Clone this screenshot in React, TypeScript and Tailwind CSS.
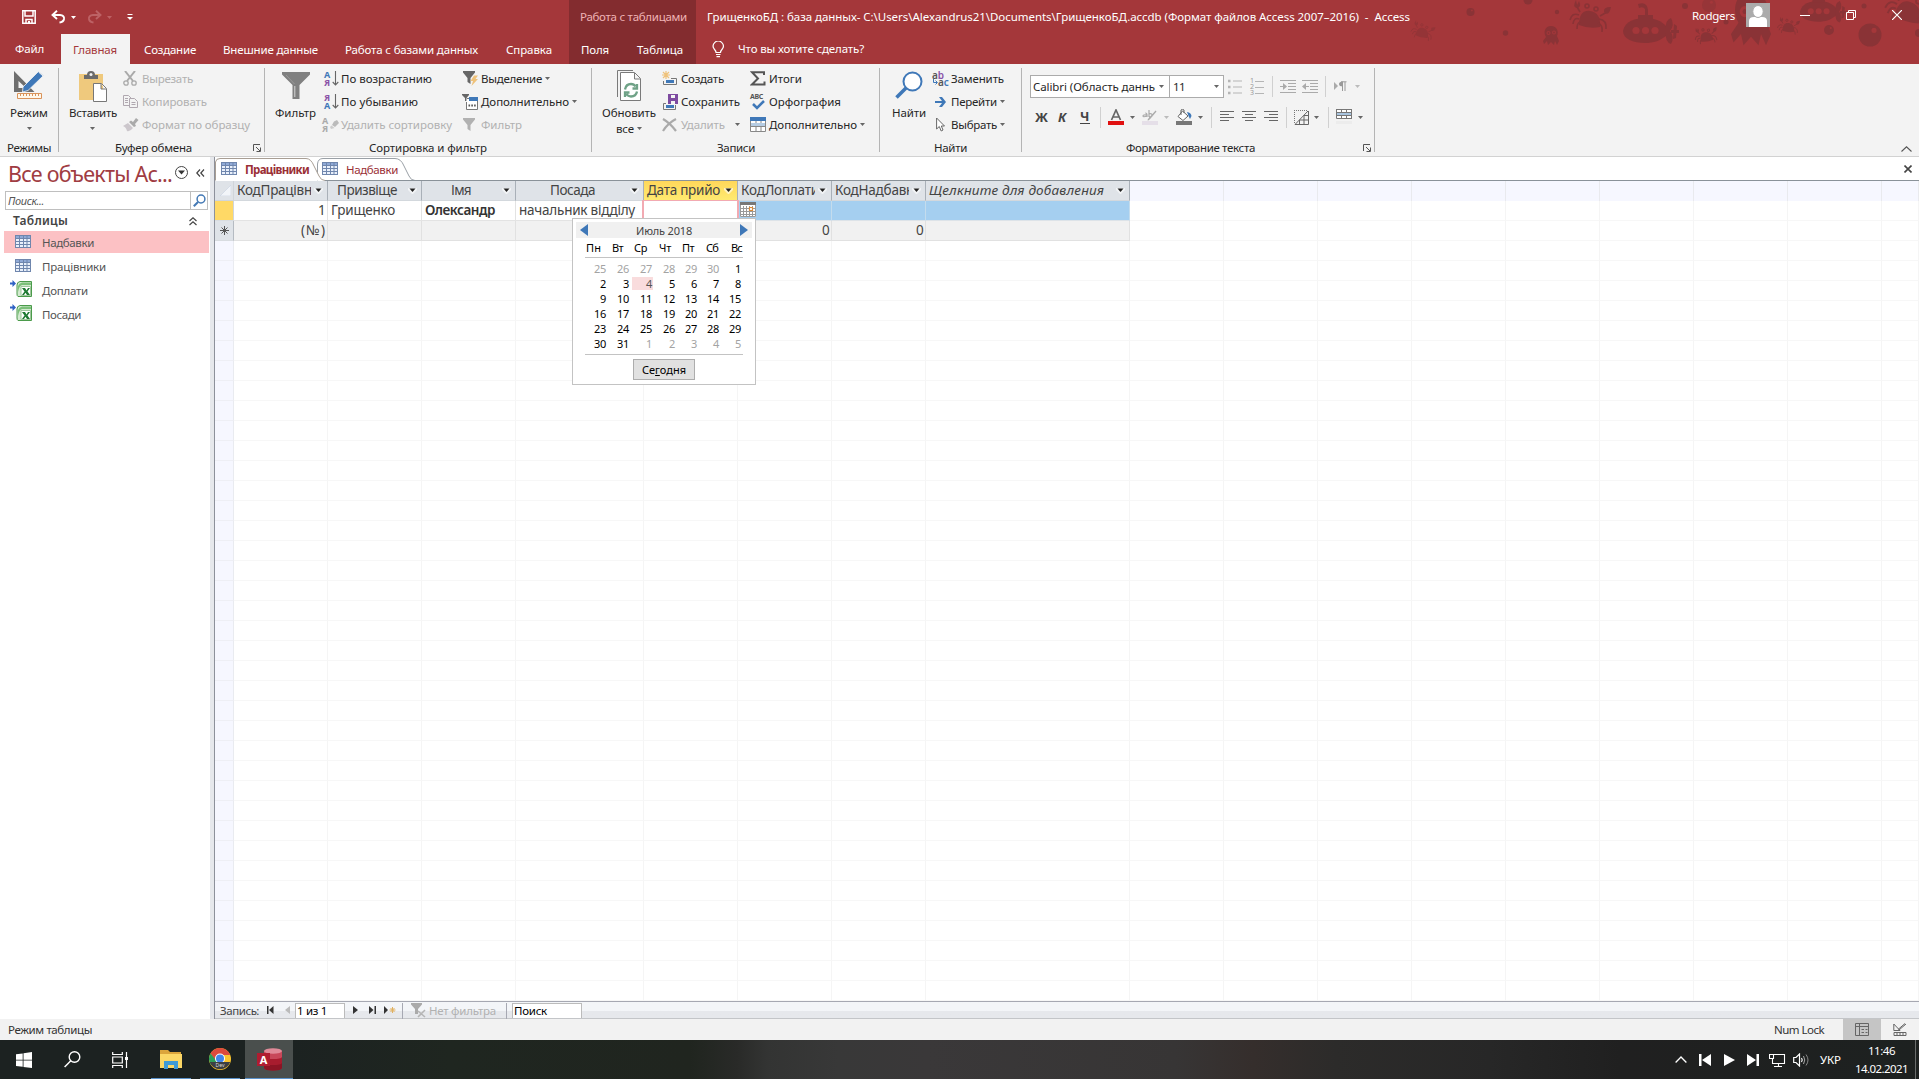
import { useLayoutEffect, useRef } from "react";
import type { ReactNode } from "react";

/* Text run tracked so that it fills the given width. */
function Fit({ w, className = "", children }: { w: number; className?: string; children: string }) {
  const ref = useRef<HTMLSpanElement>(null);
  useLayoutEffect(() => {
    const el = ref.current;
    if (!el) return;
    el.style.letterSpacing = "0px";
    const natural = el.getBoundingClientRect().width;
    el.style.letterSpacing = `${(w - natural) / children.length}px`;
  }, [w, children]);
  return (
    <span className={`inline-block shrink-0 whitespace-pre ${className}`} style={{ width: w }}>
      <span ref={ref}>{children}</span>
    </span>
  );
}

function Svg({ w, h, className = "", children }: { w: number; h: number; className?: string; children: ReactNode }) {
  return (
    <svg width={w} height={h} viewBox={`0 0 ${w} ${h}`} className={`block shrink-0 ${className}`} fill="none">
      {children}
    </svg>
  );
}

function Caret({ className = "", color = "#666" }: { className?: string; color?: string }) {
  return (
    <Svg w={5} h={3} className={className}>
      <path d="M0 0h5L2.500 3z" fill={color} />
    </Svg>
  );
}

/* ---------- title bar ---------- */

function Crab({ t }: { t: string }) {
  return (
    <g transform={t} stroke="#8a3336" fill="none" strokeWidth="1.600">
      <path d="M10 25C10 14 15 10 21 11C28 12 32 17 31 27Q20 29 10 25Z" fill="#8a3336" stroke="none" />
      <path d="M10 15Q3 12 1 20M10 19Q5 17 4 24M11 22Q8 23 8 29M30 19Q38 20 37 29M29 23Q34 25 33 32M11 12L7 5M31 16L38 12" />
      <path d="M7 0Q3 7 8 8Q13 7 10 1L8 5ZM42 7Q34 7 35 12Q40 17 42 7Z" fill="#8a3336" stroke="none" />
      <circle cx="18" cy="6" r="2" />
      <circle cx="27" cy="9" r="2" />
    </g>
  );
}

function Octopus({ t }: { t: string }) {
  return (
    <g transform={t}>
      <path d="M8 0C14 0 16 6 14 10L16 15L14 19L12 15L11 19L8 16L5 19L4 15L1 18L0 15L3 11C0 6 2 0 8 0Z" fill="#8a3336" />
      <circle cx="5.500" cy="7" r="2" fill="#a4373a" />
      <circle cx="11" cy="6.500" r="2" fill="#a4373a" />
      <circle cx="5.500" cy="7" r=".9" fill="#8a3336" />
      <circle cx="11" cy="6.500" r=".9" fill="#8a3336" />
    </g>
  );
}

function Submarine({ t }: { t: string }) {
  return (
    <g transform={t}>
      <path d="M0 19C2 9 12 6 23 6C34 6 42 11 45 17L45 22C38 29 30 31 22 31C10 31 0 27 0 19Z" fill="#8a3336" />
      <path d="M15 8V3H30V8ZM22 3V-3Q20-6 16-4L15-8Q24-11 25-2V3Z" fill="#8a3336" />
      <path d="M43 17Q42 8 48 6Q52 13 47 19Q52 25 48 32Q42 30 43 21ZM48 18H56V21H48ZM51 12L54 14L53 26L50 27Z" fill="#8a3336" />
      {[13, 22.500, 32].map((x) => (
        <circle key={x} cx={x} cy="18.500" r="3.600" fill="#a4373a" />
      ))}
    </g>
  );
}

function SeaDoodles() {
  const bubbles = [
    [70.500, 12, 4], [105.500, 33, 2.700], [128, 0, 4.500], [157, 12, 2.200], [285, 6, 3], [309, 5, 7],
    [326, 22, 2.500], [429, 30, 5], [464, 6, 2.500], [470, 35, 11.500], [519, 33, 4],
  ];
  return (
    <svg width="519" height="64" viewBox="0 0 519 64" className="pointer-events-none absolute top-0 right-0">
      {bubbles.map(([x, y, r]) => (
        <g key={x}>
          <circle cx={x} cy={y} r={r} fill="#8a3336" opacity={r === 7 ? 0.5 : 1} />
          {r > 3.500 && <circle cx={x + r * 0.35} cy={y - r * 0.4} r={r * 0.22} fill="#a4373a" />}
        </g>
      ))}
      <g opacity=".6"><Crab t="translate(12 20) rotate(8) scale(.58)" /></g>
      <Octopus t="translate(143 26)" />
      <Crab t="translate(169 0)" />
      <Submarine t="translate(223 12)" />
      <Crab t="translate(292 29) rotate(-14) scale(.58)" />
      <Octopus t="translate(331 -8) scale(2.500 2.800)" />
      <Crab t="translate(377 17) scale(.55)" />
      <Submarine t="translate(400 -4) scale(.83)" />
      <Crab t="translate(489 -16) rotate(12) scale(1.200)" />
    </svg>
  );
}

function TitleBar() {
  return (
    <div className="relative flex h-[64px] bg-[#a4373a] text-[11.5px] text-white">
      <SeaDoodles />
      <div className="w-[569px]">
        <div className="flex h-[34px] items-center pl-[22px]">
          <Svg w={14} h={14}>
            <path d="M.8.8H13.200V13.200H.8ZM3 1V6H11V1M4 13V9.500H10V13" stroke="#fff" strokeWidth="1.500" />
            <path d="M6 11h2v2H6z" fill="#fff" />
          </Svg>
          <Svg w={15} h={14} className="ml-[15px]">
            <path d="M6 .8L1.500 5L6 9M2 5H9Q13.500 5.500 13 9Q12.500 12 8.500 12.500" stroke="#fff" strokeWidth="1.900" />
          </Svg>
          <Caret className="ml-[5px]" color="#fff" />
          <Svg w={15} h={14} className="ml-[11px]">
            <path d="M9 .8L13.500 5L9 9M13 5H6Q1.500 5.500 2 9Q2.500 12 6.500 12.500" stroke="#bd6265" strokeWidth="1.900" />
          </Svg>
          <Caret className="ml-[5px]" color="#bd6265" />
          <Svg w={6} h={6} className="ml-[15px]">
            <path d="M.5 .5H5.500" stroke="#fff" />
            <path d="M0 3H6L3 6z" fill="#fff" />
          </Svg>
        </div>
        <div className="flex h-[30px] items-center leading-none">
          <Fit w={29} className="ml-[15px]">Файл</Fit>
          <div className="ml-[17px] flex h-full w-[69px] items-center bg-[#f3f3f3] pt-[2px] pl-[12px] text-[#a4373a]">
            <Fit w={44}>Главная</Fit>
          </div>
          <Fit w={52} className="mt-[2px] ml-[14px]">Создание</Fit>
          <Fit w={95} className="mt-[2px] ml-[27px]">Внешние данные</Fit>
          <Fit w={133} className="mt-[2px] ml-[27px]">Работа с базами данных</Fit>
          <Fit w={46} className="mt-[2px] ml-[28px]">Справка</Fit>
        </div>
      </div>
      <div className="w-[127px] bg-[#832c2f]">
        <div className="flex h-[34px] items-center pl-[11px] leading-none text-[#efb3b5]">
          <Fit w={107} className="-mt-px">Работа с таблицами</Fit>
        </div>
        <div className="flex h-[30px] items-center pt-[2px] pl-[12px] leading-none">
          <Fit w={28}>Поля</Fit>
          <Fit w={46} className="ml-[28px]">Таблица</Fit>
        </div>
      </div>
      <div className="flex-1">
        <div className="flex h-[34px] items-center pl-[11px] leading-none">
          <Fit w={703}>{"ГрищенкоБД : база данных- C:\\Users\\Alexandrus21\\Documents\\ГрищенкоБД.accdb (Формат файлов Access 2007–2016)  -  Access"}</Fit>
        </div>
        <div className="flex h-[30px] items-center pl-[16px] leading-none">
          <Svg w={13} h={17}>
            <path d="M4 11.500Q4 10 2.200 8A5 5 0 1 1 10.300 8Q8.500 10 8.500 11.500ZM4 13.500H8.500M4.500 15.700H8" stroke="#fff" strokeWidth="1.200" />
          </Svg>
          <Fit w={126} className="ml-[13px]">Что вы хотите сделать?</Fit>
        </div>
      </div>
      <div className="relative flex h-[30px] w-[227px] items-center leading-none">
        <Fit w={43} className="mt-px">Rodgers</Fit>
        <Svg w={24} h={24} className="ml-[11px]">
          <path d="M0 0H24V24H0Z" fill="#ababab" />
          <path d="M3 24V18Q3 14 8 14H16Q21 14 21 18V24Z" fill="#fff" />
          <ellipse cx="12" cy="8.500" rx="5.200" ry="6" fill="#fff" stroke="#ababab" />
        </Svg>
        <Svg w={10} h={10} className="ml-[30px]">
          <path d="M0 5.500H10" stroke="#fff" />
        </Svg>
        <Svg w={10} h={10} className="ml-[36px]">
          <path d="M.5 2.500H7.500V9.500H.5ZM2.500 2V.5H9.500V7.500H8" stroke="#fff" />
        </Svg>
        <Svg w={10} h={10} className="ml-[36px]">
          <path d="M0 0L10 10M10 0L0 10" stroke="#fff" strokeWidth="1.200" />
        </Svg>
      </div>
    </div>
  );
}

/* ---------- ribbon ---------- */

function Launcher() {
  return (
    <Svg w={8} h={8}>
      <path d="M.5 7V.5H7M3 3L7 7M7.500 3.500V7.500H3.500" stroke="#555" />
    </Svg>
  );
}

function Group({ width, label, labelX, labelW, launcher, children }: {
  width: string; label: string; labelX: string; labelW: number; launcher?: string; children: ReactNode;
}) {
  return (
    <div className={`relative flex shrink-0 flex-col ${width}`}>
      <div className="flex h-[76px] pr-px">{children}</div>
      <div className={`flex h-[16px] items-center leading-none ${labelX}`}>
        <Fit w={labelW}>{label}</Fit>
        {launcher && (
          <div className={launcher}>
            <Launcher />
          </div>
        )}
      </div>
      <div className="absolute top-[4px] right-0 h-[84px] w-px bg-[#b4b4b4]" />
    </div>
  );
}

function Big({ className, icon, label, w, below }: { className: string; icon: ReactNode; label: string; w: number; below?: ReactNode }) {
  return (
    <div className={`flex shrink-0 flex-col items-center pt-[6px] leading-none ${className}`}>
      <div className="flex h-[33px] items-start">{icon}</div>
      <Fit w={w} className="mt-[4px] h-[13px]">{label}</Fit>
      <div className="flex h-[14px] items-center">{below}</div>
    </div>
  );
}

function Item({ icon, label, w, caret, gap = "ml-[3px]", off = false }: {
  icon: ReactNode; label: string; w: number; caret?: boolean; gap?: string; off?: boolean;
}) {
  return (
    <div className={`flex h-[23px] items-center leading-none ${off ? "text-[#b1b1b1]" : ""}`}>
      <div className="flex w-[19px] shrink-0 items-center">{icon}</div>
      <Fit w={w}>{label}</Fit>
      {caret && <Caret className={gap} />}
    </div>
  );
}

function SortIcon({ a, b, ca, cb, erase }: { a: string; b: string; ca: string; cb: string; erase?: boolean }) {
  return (
    <div className="flex items-center">
      <div className="flex w-[8px] flex-col text-[9px] leading-[8px] font-bold">
        <span className={ca}>{a}</span>
        <span className={cb}>{b}</span>
      </div>
      {erase ? (
        <Svg w={9} h={9}>
          <path d="M4 1.500L7 0L9 3L5 7L2 5Z" fill="#bbb" />
          <path d="M1.500 5.500L4.500 8L1 9L0 7Z" fill="#ccc" />
        </Svg>
      ) : (
        <Svg w={7} h={15}>
          <path d="M3.500 0V14M.7 11L3.500 14L6.300 11" stroke="#666" strokeWidth="1.100" />
        </Svg>
      )}
    </div>
  );
}

function Funnel({ fill }: { fill: string }) {
  return <path d="M0 0H12V1.500L7.500 7V13L4.500 11V7L0 1.500Z" fill={fill} />;
}

function Sep({ className }: { className: string }) {
  return <div className={`h-[21px] w-px shrink-0 bg-[#d0d0d0] ${className}`} />;
}

function Ribbon() {
  return (
    <div className="flex h-[93px] border-b border-[#d2d2d2] bg-[#f3f3f3] text-[11.5px] text-[#262626]">
      <Group width="w-[59px]" label="Режимы" labelX="pl-[7px]" labelW={44}>
        <Big className="w-[58px]" label="Режим" w={38} below={<Caret className="mt-[3px]" />} icon={
          <Svg w={31} h={30}>
            <path d="M0 1V22H20.500ZM4.500 11V18H12Z" fill="#6e6e6e" fillRule="evenodd" />
            <path d="M9 17L24.500 1.500L29.500 5.500L14 20.500L8.500 22Z" fill="#3f78b8" stroke="#f3f3f3" strokeWidth=".8" />
            <path d="M24.500 2L29 6" stroke="#f3f3f3" />
            <path d="M3.500 23.500H27.500V28.500H3.500ZM6.500 24V26M9.500 24V26M12.500 24V26M15.500 24V26M18.500 24V26M21.500 24V26M24.500 24V26" stroke="#d9935a" fill="#fff7ea" />
          </Svg>
        } />
      </Group>

      <Group width="w-[206px]" label="Буфер обмена" labelX="pl-[56px]" labelW={77} launcher="ml-[61px]">
        <Big className="ml-[9px] w-[50px]" label="Вставить" w={48} below={<Caret className="mt-[3px] mr-[2px]" />} icon={
          <Svg w={30} h={32}>
            <path d="M1 4H25V30H1Z" fill="#efc97d" />
            <path d="M6 9V5H9Q9 1 13 1T17 5H20V9Z" fill="#6b6b6b" />
            <circle cx="13" cy="4.500" r="1.500" fill="#f3f3f3" />
            <path d="M15.500 13.500H23.500L28.500 18.500V31.500H15.500ZM23 14V19H28" fill="#fff" stroke="#777" />
          </Svg>
        } />
        <div className="ml-[5px] pt-[3px]">
          <Item off label="Вырезать" w={51} icon={
            <Svg w={15} h={15}>
              <path d="M2 0L10 10M12 0L4 10" stroke="#aaa" strokeWidth="2" />
              <circle cx="3" cy="12" r="2.200" stroke="#aaa" strokeWidth="1.300" />
              <circle cx="11" cy="12" r="2.200" stroke="#aaa" strokeWidth="1.300" />
            </Svg>
          } />
          <Item off label="Копировать" w={65} icon={
            <Svg w={15} h={15}>
              <path d="M6 11.500H.5V1.500H5.500L8 4M2 4.500H5M2 6.500H5M2 8.500H5" stroke="#b0a8b0" />
              <path d="M6.500 4.500H11.500L14.500 7.500V13.500H6.500ZM8.500 8.500H12.500M8.500 10.500H12.500" stroke="#b0a8b0" />
            </Svg>
          } />
          <Item off label="Формат по образцу" w={108} icon={
            <Svg w={16} h={14}>
              <path d="M13 0L15.500 2L12 6L13 8L11 9L6 4L8 2.500L10 4Z" fill="#aaa" />
              <path d="M5 5L10 10Q7 14 4 13Q3 9 0 8Z" fill="#ccc7cc" />
            </Svg>
          } />
        </div>
      </Group>

      <Group width="w-[327px]" label="Сортировка и фильтр" labelX="pl-[104px]" labelW={118}>
        <Big className="ml-[9px] w-[43px]" label="Фильтр" w={41} icon={
          <Svg w={28} h={30}>
            <path d="M0 2H28V4.500L17.500 15V29H10.500V15L0 4.500Z" fill="#808080" />
            <path d="M12.800 16V27" stroke="#d8d8d8" />
            <path d="M4 5L12.500 14" stroke="#999" />
          </Svg>
        } />
        <div className="ml-[5px] w-[140px] pt-[3px]">
          <Item label="По возрастанию" w={91} icon={<div className="pl-[2px]"><SortIcon a="А" b="Я" ca="text-[#3f78b8]" cb="text-[#8a52a8]" /></div>} />
          <Item label="По убыванию" w={77} icon={<div className="pl-[2px]"><SortIcon a="Я" b="А" ca="text-[#8a52a8]" cb="text-[#3f78b8]" /></div>} />
          <Item off label="Удалить сортировку" w={111} icon={<SortIcon a="А" b="Я" ca="text-[#aaa]" cb="text-[#aaa]" erase />} />
        </div>
        <div className="pt-[3px]">
          <Item caret label="Выделение" w={61} icon={
            <Svg w={16} h={16} className="ml-px">
              <Funnel fill="#666" />
              <path d="M11 4.500H15L12.500 8H15L8.500 15L10 10H7.500Z" fill="#efc27a" />
            </Svg>
          } />
          <Item caret label="Дополнительно" w={88} icon={
            <Svg w={16} h={16}>
              <path d="M0 0H7V1L4.500 4V7H3V4L0 1Z" fill="#666" />
              <path d="M5 4.500H15.500V15.500H4.500V8" stroke="#777" fill="#fff" />
              <path d="M7 3H16V7H7Z" fill="#3f78b8" />
              <path d="M6.500 11.500H14" stroke="#555" strokeWidth="2" strokeDasharray="1.600 1.200" />
            </Svg>
          } />
          <Item off label="Фильтр" w={41} icon={<Svg w={16} h={14} className="ml-px"><Funnel fill="#b1b1b1" /></Svg>} />
        </div>
      </Group>

      <Group width="w-[288px]" label="Записи" labelX="pl-[125px]" labelW={38}>
        <Big className="ml-[9px] w-[56px]" label="Обновить" w={54}
          below={<div className="mt-[3px] flex items-center"><Fit w={18}>все</Fit><Caret className="ml-[3px]" /></div>}
          icon={
            <Svg w={25} h={31}>
              <path d="M.5 27V.5H16" stroke="#7a7a7a" />
              <path d="M3.500 2.500H17.500L23.500 8.500V30.500H3.500ZM17.500 3V9H23" stroke="#7a7a7a" fill="#fff" />
              <path d="M8 19.500Q9 14 14 14Q17 14 18.500 16.500M20 14V18.500H15.500M20 21.500Q19 26.500 14 26.500Q11 26.500 9.500 24M8 27V22.500H12.500" stroke="#6fa287" strokeWidth="2.300" />
            </Svg>
          } />
        <div className="ml-[5px] w-[88px] pt-[3px]">
          <Item label="Создать" w={43} icon={
            <Svg w={16} h={16}>
              <path d="M4 0V8M0 4H8M1 1L7 7M7 1L1 7" stroke="#efc27a" strokeWidth="1.200" />
              <path d="M9 7.500H14.500V13.500H1.500V10" stroke="#777" />
              <path d="M4 9H12V12H4Z" fill="#3f78b8" />
            </Svg>
          } />
          <Item label="Сохранить" w={59} icon={
            <Svg w={16} h={16}>
              <path d="M4 9.500H1.500V15.500H13.500V11" stroke="#777" />
              <path d="M4 11H12V14H4Z" fill="#3f78b8" />
              <path d="M6 0H16V10H6Z" fill="#7d4aa0" />
              <path d="M9 1H13V4H9ZM9 7H13V10H9Z" fill="#f3f3f3" />
            </Svg>
          } />
          <Item off caret gap="ml-[10px]" label="Удалить" w={44} icon={
            <Svg w={15} h={14}>
              <path d="M1 1Q8 5 14 13M14 1Q6 5 1 13" stroke="#aaa" strokeWidth="2.200" />
            </Svg>
          } />
        </div>
        <div className="pt-[3px]">
          <Item label="Итоги" w={33} icon={
            <Svg w={16} h={15}>
              <path d="M14 4V1.200H2L8 7.500L2 13.500H14.500V10.500" stroke="#555" strokeWidth="2" />
            </Svg>
          } />
          <Item label="Орфография" w={72} icon={
            <div className="flex w-[16px] flex-col">
              <span className="text-[7px] leading-[6px] font-bold tracking-[-0.4px] text-[#555]">ABC</span>
              <Svg w={16} h={10}>
                <path d="M3 4L7 8L14 1" stroke="#3f78b8" strokeWidth="2.500" />
              </Svg>
            </div>
          } />
          <Item caret label="Дополнительно" w={88} icon={
            <Svg w={16} h={15}>
              <path d="M.5 .5H15.500V14.500H.5ZM.5 9.500H15.500M6 4V14M11 4V14" stroke="#888" fill="#fff" />
              <path d="M0 0H16V4H0Z" fill="#3f78b8" />
              <path d="M1 6H15V9H1Z" fill="#b6cde4" />
            </Svg>
          } />
        </div>
      </Group>

      <Group width="w-[142px]" label="Найти" labelX="pl-[54px]" labelW={33}>
        <Big className="ml-[11px] w-[36px]" label="Найти" w={34} icon={
          <Svg w={28} h={30}>
            <circle cx="17.500" cy="11.500" r="9" stroke="#3f78b8" strokeWidth="2" fill="#fff" />
            <path d="M11 18L1.500 27.500" stroke="#3f78b8" strokeWidth="3.600" />
          </Svg>
        } />
        <div className="ml-[5px] pt-[3px]">
          <Item label="Заменить" w={53} icon={
            <div className="flex flex-col text-[10px] leading-[7px] font-semibold">
              <span className="text-[#555]">a<span className="text-[#8a52a8]">b</span></span>
              <span className="flex items-center pl-px text-[#555]">
                <Svg w={5} h={6}><path d="M.5 0V3.500H4M2.500 1.500L4.500 3.500L2.500 5.500" stroke="#3f78b8" /></Svg>
                a<span className="text-[#3f78b8]">c</span>
              </span>
            </div>
          } />
          <Item caret label="Перейти" w={46} icon={
            <Svg w={16} h={12} className="ml-[3px]">
              <path d="M0 5H7L4 1H7L11 6L7 11H4L7 7H0Z" fill="#3f78b8" />
            </Svg>
          } />
          <Item caret label="Выбрать" w={46} icon={
            <Svg w={10} h={15} className="ml-[4px]">
              <path d="M.6 1V12L3.300 9.500L5.200 14L7 13L5.300 9H8.500Z" stroke="#666" fill="#fff" />
            </Svg>
          } />
        </div>
      </Group>

      <Group width="w-[353px]" label="Форматирование текста" labelX="pl-[104px]" labelW={129} launcher="ml-[108px]">
        <div className="pt-[11px] pl-[8px]">
          <div className="flex h-[23px] items-center leading-none">
            <div className="flex h-[23px] w-[140px] shrink-0 items-center border border-[#ababab] bg-white pl-[2px]">
              <Fit w={122}>Calibri (Область даннь</Fit>
              <Caret className="ml-[4px]" />
            </div>
            <div className="-ml-px flex h-[23px] w-[55px] shrink-0 items-center border border-[#ababab] bg-white pl-[3px]">
              <Fit w={12}>11</Fit>
              <Caret className="ml-[29px]" />
            </div>
            <Svg w={14} h={16} className="ml-[4px]">
              <path d="M5 2H14M5 8H14M5 14H14" stroke="#b5b5b5" />
              <path d="M0 .8H2.500V3.200H0ZM0 6.800H2.500V9.200H0ZM0 12.800H2.500V15.200H0Z" fill="#b5b5b5" />
            </Svg>
            <div className="ml-[8px] flex items-center">
              <div className="flex w-[5px] flex-col text-[7px] leading-[6px] text-[#999]">
                <span>1</span><span>2</span><span>3</span>
              </div>
              <Svg w={10} h={16}><path d="M0 2.500H9M0 8.500H9M0 14.500H9" stroke="#b5b5b5" /></Svg>
            </div>
            <Sep className="ml-[7px]" />
            <Svg w={16} h={14} className="ml-[7px]">
              <path d="M0 .5H16M8 3.500H16M8 6.500H16M8 9.500H16M0 12.500H16M0 6.500H6" stroke="#aaa" />
              <path d="M3 3L7 6.500L3 10Z" fill="#aaa" />
            </Svg>
            <Svg w={16} h={14} className="ml-[6px]">
              <path d="M0 .5H16M8 3.500H16M8 6.500H16M8 9.500H16M0 12.500H16M1 6.500H7" stroke="#aaa" />
              <path d="M4 3L0 6.500L4 10Z" fill="#aaa" />
            </Svg>
            <Sep className="ml-[7px]" />
            <Svg w={13} h={11} className="ml-[8px]">
              <path d="M0 1L4 5L0 9Z" fill="#aaa" />
              <path d="M8.500 1V10M11 1V10M7 .8H12.500" stroke="#999" />
              <path d="M9 .5Q5 .5 5 3T9 5.500Z" fill="#999" />
            </Svg>
            <Caret className="ml-[8px]" color="#bbb" />
          </div>
          <div className="mt-[8px] flex h-[22px] items-center leading-none">
            <Fit w={12} className="ml-[5px] text-[13px] font-bold text-[#444]">Ж</Fit>
            <Fit w={9} className="ml-[11px] text-[13px] font-bold text-[#444] italic">К</Fit>
            <div className="ml-[13px] border-b border-[#444] text-[13px] text-[#444]"><Fit w={10} className="font-bold">Ч</Fit></div>
            <Sep className="ml-[10px]" />
            <Svg w={16} h={16} className="ml-[7px]">
              <path d="M3.500 11L8 1L12.500 11M5 8H11" stroke="#666" strokeWidth="1.700" />
              <path d="M0 12H16V16H0Z" fill="#e01010" />
            </Svg>
            <Caret className="ml-[6px]" />
            <Svg w={16} h={16} className="ml-[7px]">
              <path d="M3.200 4Q5 4 5 6V8M5 6Q1 5.500 1 7T5 7M7 1V8M7 5Q10 4 10 6T7 8M14 2L6 11" stroke="#aaa" strokeWidth="1.200" />
              <path d="M15 2L8 10L5 12Z" fill="#aaa" />
              <path d="M0 12H16V16H0Z" fill="#e5dfe8" />
            </Svg>
            <Caret className="ml-[6px]" color="#bbb" />
            <Svg w={16} h={16} className="ml-[7px]">
              <path d="M6.500 2L12 7L7 11.500L2 7.500Z" stroke="#666" fill="#fff" />
              <path d="M5 6V1Q6.500-.5 8 1V4" stroke="#666" />
              <path d="M11 3Q15 3.500 15.500 7L14 10L12.500 7Z" fill="#3f78b8" />
              <path d="M0 12H16V16H0Z" fill="#777" />
            </Svg>
            <Caret className="ml-[6px]" />
            <Sep className="ml-[8px]" />
            <Svg w={14} h={12} className="ml-[8px]"><path d="M0 .5H14M0 3.500H9M0 6.500H14M0 9.500H9" stroke="#666" /></Svg>
            <Svg w={14} h={12} className="ml-[8px]"><path d="M0 .5H14M3 3.500H11M0 6.500H14M3 9.500H11" stroke="#666" /></Svg>
            <Svg w={14} h={12} className="ml-[8px]"><path d="M0 .5H14M5 3.500H14M0 6.500H14M5 9.500H14" stroke="#666" /></Svg>
            <Sep className="ml-[8px]" />
            <Svg w={15} h={15} className="ml-[7px]">
              <path d="M0 .5H14M.5 0V14" stroke="#777" strokeDasharray="1 1" />
              <path d="M14.500 1V14.500H1L14 1M14 5.500H10V14M5.500 14V10H14" stroke="#666" />
            </Svg>
            <Caret className="ml-[5px]" />
            <Sep className="ml-[9px]" />
            <Svg w={16} h={16} className="ml-[7px]">
              <path d="M0 .5H16V9.500H.5V.5M5.500 0V10M10.500 0V10M0 3.500H16M0 6.500H16M15.500 0V10" stroke="#777" fill="#fff" />
              <path d="M1 4H15V6H1Z" fill="#a9c5e0" />
              <path d="M0 12H16V15H0Z" fill="#ececec" />
            </Svg>
            <Caret className="ml-[6px]" />
          </div>
        </div>
      </Group>
      <div className="flex flex-1 items-end justify-end pr-[7px] pb-[4px]">
        <Svg w={11} h={6}><path d="M.5 5.500L5.500 .8L10.500 5.500" stroke="#555" strokeWidth="1.100" /></Svg>
      </div>
    </div>
  );
}

/* ---------- navigation pane ---------- */

function TableIcon() {
  return (
    <Svg w={16} h={13}>
      <path d="M0 0H16V13H0Z" fill="#6f86ad" />
      <path d="M1 1H4V3H1ZM5 1H8V3H5ZM9 1H11.500V3H9ZM12.500 1H15V3H12.500Z" fill="#8fa9d6" />
      <path d="M1 4H4V6H1ZM5 4H8V6H5ZM9 4H11.500V6H9ZM12.500 4H15V6H12.500ZM1 7H4V9H1ZM5 7H8V9H5ZM9 7H11.500V9H9ZM12.500 7H15V9H12.500ZM1 10H4V12H1ZM5 10H8V12H5ZM9 10H11.500V12H9ZM12.500 10H15V12H12.500Z" fill="#e9f0fb" />
    </Svg>
  );
}

function ExcelLinkIcon() {
  return (
    <Svg w={22} h={18}>
      <path d="M4 2.500H6.500V0L10 3.500L6.500 7V4.500H4Z" transform="translate(-4 0)" fill="#2f62c4" />
      <path d="M10 1.500H21.500V16.500H8Q7 16 7 14V5Q7 2 10 1.500Z" fill="#d3ead0" stroke="#4b9b4b" />
      <path d="M8 6Q9 3 12 2.500H21V5H12Q9 6 8 12Z" fill="#7cc07a" />
      <path d="M11 6.500H20.500V15.500H11Z" fill="#fff" stroke="#9fc79d" />
      <path d="M12 8H15L16.500 10.500L18 8H20L17.500 11.500L20 15H17L15.500 12.700L14 15H12L14.500 11.500Z" fill="#1f7a33" />
    </Svg>
  );
}

function NavItem({ label, w, excel, selected }: { label: string; w: number; excel?: boolean; selected?: boolean }) {
  return (
    <div className={`mb-[2px] ml-[4px] flex h-[22px] w-[205px] items-center leading-none ${selected ? "bg-[#fcc1c4]" : ""}`}>
      <div className={`-mt-[2px] w-[38px] ${excel ? "pl-[6px]" : "pl-[11px]"}`}>{excel ? <ExcelLinkIcon /> : <TableIcon />}</div>
      <Fit w={w} className="mt-px">{label}</Fit>
    </div>
  );
}

function NavPane() {
  return (
    <div className="w-[210px] shrink-0 bg-white text-[11.5px] text-[#555]">
      <div className="flex h-[34px] items-center pl-[8px]">
        <Fit w={164} className="text-[21.5px] leading-none text-[#a03c42]">Все объекты Ac...</Fit>
        <Svg w={13} h={13} className="ml-[3px] mb-[4px]">
          <circle cx="6.500" cy="6.500" r="6" stroke="#444" />
          <path d="M3 4.500H10L6.500 8.500Z" fill="#333" />
        </Svg>
        <Svg w={9} h={8} className="ml-[8px] mb-[2px]">
          <path d="M4 .5L.8 4L4 7.500M8 .5L4.800 4L8 7.500" stroke="#444" strokeWidth="1.200" />
        </Svg>
      </div>
      <div className="ml-[5px] flex h-[19px] w-[203px] items-center border border-[#bfbfbf]">
        <div className="flex h-full w-[185px] items-center border-r border-[#bfbfbf] pl-[2px] text-[11px] leading-none italic">
          <Fit w={36}>Поиск...</Fit>
        </div>
        <Svg w={13} h={13} className="ml-[2px]">
          <circle cx="8" cy="5" r="3.900" stroke="#4479b5" strokeWidth="1.500" />
          <path d="M5 8L.8 12.200" stroke="#4479b5" strokeWidth="2" />
        </Svg>
      </div>
      <div className="flex h-[21px] items-center pt-px pl-[13px] text-[12px] leading-none font-semibold text-[#444]">
        <Fit w={55}>Таблицы</Fit>
        <Svg w={8} h={9} className="ml-[121px]">
          <path d="M.5 4L4 .8L7.500 4M.5 8L4 4.800L7.500 8" stroke="#444" strokeWidth="1.200" />
        </Svg>
      </div>
      <NavItem selected label="Надбавки" w={52} />
      <NavItem label="Працівники" w={64} />
      <NavItem excel label="Доплати" w={46} />
      <NavItem excel label="Посади" w={39} />
    </div>
  );
}

/* ---------- datasheet ---------- */

function DocTabs() {
  return (
    <div className="relative h-[24px] bg-white text-[11.5px]">
      <svg width="1704" height="24" viewBox="0 0 1704 24" className="absolute inset-0" fill="none">
        <path d="M102.500 23.500V7Q103 1.500 108 1.500H180Q186 1.500 189 9L194 19Q196 23.500 200 23.500" fill="#fff" stroke="#9aa0a6" />
        <path d="M110 23.500H1704" stroke="#8a9299" />
        <path d="M.5 23.500V5Q1 1.500 5 1.500H91Q96 1.500 99 9L104 19Q106 23.500 110 23.500" fill="#fff" stroke="#a89e94" />
      </svg>
      <div className="relative flex h-[23px] items-center pl-[6px] leading-none text-[#9a2f36]">
        <TableIcon />
        <Fit w={64} className="mt-[2px] ml-[8px] font-bold">Працівники</Fit>
        <div className="ml-[13px]"><TableIcon /></div>
        <Fit w={52} className="mt-[2px] ml-[8px]">Надбавки</Fit>
        <Svg w={8} h={8} className="mr-[7px] ml-auto">
          <path d="M.5 .5L7.500 7.500M7.500 .5L.5 7.500" stroke="#444" strokeWidth="1.600" />
        </Svg>
      </div>
    </div>
  );
}

const colWidths = [
  "w-[19px]", "w-[94px]", "w-[94px]", "w-[94px]", "w-[128px]", "w-[94px]", "w-[94px]", "w-[94px]", "w-[204px]",
  "w-[94px]", "w-[94px]", "w-[94px]", "w-[94px]", "w-[94px]", "w-[94px]", "w-[94px]", "w-[94px]", "w-[37px]",
];

const headers = [
  { text: "КодПрацівн", w: 75, pad: "pl-[3px]", style: "" },
  { text: "Призвіще", w: 60, pad: "pl-[9px]", style: "" },
  { text: "Імя", w: 20, pad: "pl-[29px]", style: "" },
  { text: "Посада", w: 45, pad: "pl-[34px]", style: "" },
  { text: "Дата прийо", w: 73, pad: "pl-[3px]", style: "" },
  { text: "КодЛоплати", w: 78, pad: "pl-[3px]", style: "" },
  { text: "КодНадбавк", w: 78, pad: "pl-[3px]", style: "" },
  { text: "Щелкните для добавления", w: 175, pad: "pl-[3px]", style: "italic" },
];

function HeaderRow() {
  return (
    <div className="flex h-[20px] leading-none">
      <div className="flex h-[20px] w-[19px] items-center border-r border-b border-[#d0d5da] bg-[#dfe3e8] pl-[5px]">
        <Svg w={11} h={11}><path d="M11 0V11H0Z" fill="#f2f5f9" stroke="#c8d2e0" strokeWidth=".6" /></Svg>
      </div>
      {headers.map((h, i) => (
        <div key={h.text} className={`flex h-[20px] items-center border-r border-b border-r-[#a9b0b8] text-[13.5px] text-[#444] ${colWidths[i + 1]} ${i === 4 ? "border-b-[#f0cd5c] bg-linear-to-b from-[#ffd75a] to-[#ffea70]" : "border-b-[#d3d8dd] bg-[#dfe3e8]"}`}>
          <div className={`mr-[3px] h-[19px] min-w-0 flex-1 overflow-hidden leading-[18px] ${h.pad} ${h.style}`}>
            <Fit w={h.w}>{h.text}</Fit>
          </div>
          <Svg w={9} h={7} className="mr-[4px]">
            <path d="M0 1H9V3L5 7H4L0 3Z" fill="#fff" opacity=".6" />
            <path d="M1.500 1.500H7.500L4.500 5Z" fill="#222" />
          </Svg>
        </div>
      ))}
      {colWidths.slice(9).map((w, i) => (
        <div key={i} className={`h-[20px] border-r border-[#e9eaee] bg-[#f6f7ff] ${w}`} />
      ))}
    </div>
  );
}

function cellTone(row: number, col: number) {
  if (col === 0) {
    if (row === 0) return "border-r-[#d0d5da] border-b-[#d8dce0] bg-[#ffd966]";
    if (row === 1) return "border-r-[#b5bbc2] border-b-[#d8dce0] bg-[#dfe3e8]";
    return "border-r-[#e9ebf0] border-b-[#eeeff5] bg-[#f6f7ff]";
  }
  if (row === 0 && col >= 6 && col <= 8) return "border-r-[#c4dced] border-b-[#dde3e8] bg-[#a5cff0]";
  if (row === 0 && col <= 8) return "border-r-[#e3e3e3] border-b-[#e3e3e3] bg-white";
  if (row === 1 && col <= 8) return "border-r-[#e1e1e1] border-b-[#e1e1e1] bg-[#f1f1f1]";
  return "border-r-[#f5f5f5] border-b-[#f7f7f7] bg-white";
}

const cellText: Record<string, ReactNode> = {
  "0-1": <Fit w={8} className="ml-[84px]">1</Fit>,
  "0-2": <Fit w={64} className="ml-[3px]">Грищенко</Fit>,
  "0-3": <Fit w={70} className="ml-[3px] font-semibold text-[#333]">Олександр</Fit>,
  "0-4": <Fit w={116} className="ml-[3px]">начальник відділу</Fit>,
  "1-0": (
    <Svg w={9} h={9} className="ml-[5px]">
      <path d="M4.500 0V9M0 4.500H9M1.500 1.500L7.500 7.500M7.500 1.500L1.500 7.500" stroke="#555" />
    </Svg>
  ),
  "1-1": <Fit w={25} className="ml-[67px]">(№)</Fit>,
  "1-6": <Fit w={8} className="ml-[84px]">0</Fit>,
  "1-7": <Fit w={8} className="ml-[84px]">0</Fit>,
};

function Datasheet() {
  return (
    <div className="relative h-[820px] overflow-hidden">
      <HeaderRow />
      {Array.from({ length: 40 }, (_, r) => (
        <div key={r} className="flex h-[20px]">
          {colWidths.map((w, c) => (
            <div key={c} className={`flex h-[20px] shrink-0 items-center border-r border-b text-[13.5px] leading-none text-[#444] ${w} ${cellTone(r, c)}`}>
              {cellText[`${r}-${c}`]}
            </div>
          ))}
        </div>
      ))}
      <div className="absolute top-[19px] left-[427px] h-[22px] w-[97px] border-2 border-t border-[#f2aab2]" />
      <div className="absolute top-[21px] left-[525px]">
        <Svg w={16} h={15}>
          <path d="M0 0H16V15H0Z" fill="#fff" />
          <path d="M0 0H16V3H0Z" fill="#777" />
          <path d="M.5 3V14.500H15.500V3M3.500 4V15M6.500 4V15M9.500 4V15M12.500 4V15M0 6.500H15M0 9.500H15M0 12.500H15" stroke="#999" />
          <path d="M9.500 5.500H12.500V8.500H9.500Z" stroke="#d98b3a" fill="#fff" strokeWidth="1.200" />
        </Svg>
      </div>
      <DatePicker />
    </div>
  );
}

const weekdays = ["Пн", "Вт", "Ср", "Чт", "Пт", "Сб", "Вс"];
const weekGap = ["w-[26px]", "w-[22px]", "w-[25px]", "w-[23px]", "w-[24px]", "w-[25px]", "w-[14px]"];
const weekW = [15, 11, 13, 12, 12, 12, 11];
const dayCols = ["w-[33px]", "w-[23px]", "w-[23px]", "w-[23px]", "w-[22px]", "w-[22px]", "w-[22px]"];
const weeks = [
  [25, 26, 27, 28, 29, 30, 1],
  [2, 3, 4, 5, 6, 7, 8],
  [9, 10, 11, 12, 13, 14, 15],
  [16, 17, 18, 19, 20, 21, 22],
  [23, 24, 25, 26, 27, 28, 29],
  [30, 31, 1, 2, 3, 4, 5],
];

function DatePicker() {
  return (
    <div className="absolute top-[37px] left-[357px] h-[167px] w-[184px] border border-[#c3c3c3] bg-white text-[11px] leading-none text-black">
      <div className="mx-[3px] mt-[3px] flex h-[16px] items-center bg-[#f0f0f0] text-[#444]">
        <Svg w={8} h={12} className="ml-[4px]"><path d="M8 0V12L0 6Z" fill="#3f78b8" /></Svg>
        <Fit w={56} className="ml-[48px]">Июль 2018</Fit>
        <Svg w={8} h={12} className="ml-[48px]"><path d="M0 0V12L8 6Z" fill="#3f78b8" /></Svg>
      </div>
      <div className="ml-[13px] flex h-[19px] items-center">
        {weekdays.map((d, i) => (
          <div key={d} className={weekGap[i]}><Fit w={weekW[i]}>{d}</Fit></div>
        ))}
      </div>
      <div className="ml-[12px] h-px w-[158px] bg-[#c3c3c3]" />
      <div className="mt-[3px]">
        {weeks.map((week, r) => (
          <div key={r} className="flex h-[15px] items-center">
            {week.map((d, c) => {
              const other = (r === 0 && d > 20) || (r === 5 && d < 10);
              const picked = r === 1 && d === 4;
              return (
                <div key={c} className={`flex h-[13px] items-center justify-end ${dayCols[c]} ${other ? "text-[#a3a3a3]" : ""}`}>
                  {picked ? (
                    <span className="-mr-px flex h-[13px] w-[21px] shrink-0 items-center justify-end bg-[#f9dcdd] pr-px text-[#555]"><Fit w={6}>{`${d}`}</Fit></span>
                  ) : (
                    <Fit w={d > 9 ? 12 : 6}>{`${d}`}</Fit>
                  )}
                </div>
              );
            })}
          </div>
        ))}
      </div>
      <div className="mt-[3px] ml-[12px] h-px w-[158px] bg-[#c3c3c3]" />
      <div className="mt-[4px] ml-[60px] flex h-[21px] w-[62px] items-center justify-center border border-[#adadad] bg-[#e1e1e1]">
        <span>Се<span className="underline">г</span>одня</span>
      </div>
    </div>
  );
}

function RecordBar() {
  return (
    <div className="flex h-[18px] items-center border-t border-b border-t-[#a6a8b2] border-b-[#c3c5c8] bg-linear-to-b from-[#f3f5f8] from-55% to-[#e6e8ec] to-55% pt-px text-[11.5px] leading-none text-[#444]">
      <Fit w={39} className="ml-[5px]">Запись:</Fit>
      <Svg w={7} h={8} className="-mt-px ml-[8px]"><path d="M0 0H1.500V8H0ZM6.500 0V8L2 4Z" fill="#333" /></Svg>
      <Svg w={5} h={8} className="-mt-px ml-[11px]"><path d="M5 0V8L0 4Z" fill="#bbb" /></Svg>
      <div className="ml-[5px] flex h-[15px] w-[50px] items-center self-end border border-b-0 border-[#bbb] bg-white pl-px text-black">
        <Fit w={30}>1 из 1</Fit>
      </div>
      <Svg w={5} h={8} className="-mt-px ml-[8px]"><path d="M0 0V8L5 4Z" fill="#333" /></Svg>
      <Svg w={7} h={8} className="-mt-px ml-[11px]"><path d="M5.500 0H7V8H5.500ZM0 0V8L4.500 4Z" fill="#333" /></Svg>
      <Svg w={12} h={8} className="-mt-px ml-[8px]">
        <path d="M0 0V8L4 4Z" fill="#333" />
        <path d="M8.500 1V7M5.500 4H11.500M6.500 2L10.500 6M10.500 2L6.500 6" stroke="#e0b060" />
      </Svg>
      <div className="ml-[6px] h-[16px] w-px bg-[#a6a8b2]" />
      <Svg w={15} h={15} className="ml-[8px]">
        <path d="M0 0H11V1.500L7 6V11H4V6L0 1.500Z" fill="#aaa" />
        <path d="M7 8L14 14M14 7L7 14" stroke="#b5b5b5" strokeWidth="1.600" />
      </Svg>
      <Fit w={67} className="ml-[3px] text-[#b1b1b1]">Нет фильтра</Fit>
      <div className="ml-[10px] h-[16px] w-px bg-[#a6a8b2]" />
      <div className="ml-[5px] flex h-[15px] w-[70px] items-center self-end border border-b-0 border-[#bbb] bg-white pl-px text-black">
        <Fit w={33}>Поиск</Fit>
      </div>
    </div>
  );
}

function StatusBar() {
  return (
    <div className="flex h-[21px] items-center bg-[#f2f2f2] text-[11.5px] leading-none text-[#333]">
      <Fit w={84} className="ml-[8px]">Режим таблицы</Fit>
      <Fit w={50} className="mt-px ml-auto">Num Lock</Fit>
      <div className="ml-[19px] flex h-[21px] w-[38px] items-center justify-center bg-[#c5c5c5]">
        <Svg w={14} h={13}>
          <path d="M.5 .5H13.500V12.500H.5ZM4.500 0V13M0 3.500H14M6.500 6.500H9M10.500 6.500H12.500M6.500 9.500H9M10.500 9.500H12.500" stroke="#666" />
        </Svg>
      </div>
      <Svg w={14} h={13} className="mr-[12px] ml-[12px]">
        <path d="M.8 1V7.500H7ZM5 6.500L12 .5M6 7L13 1M1 9.500H13V12.500H1ZM4 10V12M7 10V12M10 10V12" stroke="#666" />
      </Svg>
    </div>
  );
}

/* ---------- taskbar ---------- */

function Taskbar() {
  return (
    <div className="flex h-[39px] items-center [background-image:linear-gradient(90deg,#1c2221_0px,#1c2221_290px,#1f2620_450px,#20251f_690px,#292a28_737px,#333433_767px,#383838_838px,#3a3839_927px,#373535_1176px,#352e2c_1253px,#2c2b2a_1336px,#272727_1490px,#202020_1620px,#1d2120_1919px)] text-[11.5px] leading-none text-white">
      <Svg w={16} h={16} className="ml-[16px]">
        <path d="M0 2.300L6.700 1.400V7.700H0ZM7.500 1.300L16 0V7.700H7.500ZM0 8.500H6.700V14.800L0 13.900ZM7.500 8.500H16V16L7.500 14.900Z" fill="#fff" />
      </Svg>
      <Svg w={17} h={17} className="ml-[32px]">
        <circle cx="10.500" cy="6" r="5.300" stroke="#fff" strokeWidth="1.400" />
        <path d="M6.800 9.800L.6 16" stroke="#fff" strokeWidth="1.500" />
      </Svg>
      <Svg w={16} h={16} className="ml-[31px]">
        <path d="M.7 0V2.500H10.300V0M.7 16V13.500H10.300V16M.7 5H10.300V11H.7ZM14.500 0V16" stroke="#fff" strokeWidth="1.200" />
        <path d="M13 5H16V8H13Z" fill="#fff" />
      </Svg>
      <div className="ml-[23px] flex h-full w-[40px] items-center justify-center border-b border-[#5b93cc]">
        <Svg w={22} h={19}>
          <path d="M0 0H8L10 2H21V8H0Z" fill="#dba53c" />
          <path d="M0 4H22V18H0Z" fill="#fbd766" />
          <path d="M4 19V11H18V19H14V15H8V19Z" fill="#3f9ad6" />
        </Svg>
      </div>
      <div className="ml-[9px] flex h-full w-[40px] items-center justify-center border-b border-[#5b93cc]">
        <Svg w={22} h={22}>
          <circle cx="11" cy="11" r="11" fill="#fbc52e" />
          <path d="M1.500 5.500A11 11 0 0 1 20.500 5.500L21 7H11L6 12Z" fill="#dd4a3c" />
          <path d="M1.500 5.500A11 11 0 0 0 2 17L9 15L6 11Z" fill="#2e9e58" />
          <circle cx="11" cy="10.500" r="5" fill="#fff" />
          <circle cx="11" cy="10.500" r="4" fill="#4285e8" />
          <path d="M.7 14H21.300A11 11 0 0 1 .7 14Z" fill="#3c3f42" />
          <text x="11" y="19" textAnchor="middle" fontSize="5" fill="#ddd" fontFamily="Noto Sans">Dev</text>
        </Svg>
      </div>
      <div className="ml-[5px] flex h-full w-[48px] items-center justify-center border-b border-[#5b93cc] bg-[#4a4f4d]">
        <Svg w={25} h={23}>
          <path d="M7 3V20Q8 22.500 16 22.500T25 20V3Z" fill="#a81c2e" />
          <path d="M7 3V9Q8 11 16 11T25 9V3Z" fill="#c8485a" />
          <path d="M7 15Q8 17 16 17T25 15V20Q24 22.500 16 22.500T7 20Z" fill="#8c1424" />
          <ellipse cx="16" cy="3" rx="9" ry="2.800" fill="#e08a98" />
          <path d="M0 5H13V18H0Z" fill="#b01c30" />
          <text x="6.500" y="15.500" textAnchor="middle" fontSize="11" fontWeight="bold" fill="#fff" fontFamily="Noto Sans">A</text>
        </Svg>
      </div>
      <Svg w={12} h={7} className="ml-auto"><path d="M.6 6.500L6 1L11.400 6.500" stroke="#fff" strokeWidth="1.300" /></Svg>
      <Svg w={12} h={12} className="ml-[12px]"><path d="M0 0H2.500V12H0ZM12 0V12L3 6Z" fill="#fff" /></Svg>
      <Svg w={11} h={12} className="ml-[13px]"><path d="M0 0V12L11 6Z" fill="#fff" /></Svg>
      <Svg w={12} h={12} className="ml-[12px]"><path d="M9.500 0H12V12H9.500ZM0 0V12L9 6Z" fill="#fff" /></Svg>
      <Svg w={17} h={14} className="ml-[10px]">
        <path d="M5 1.500H15.500V10.500H3.500V6M9.500 11V13.500M5 13.500H13M.5 1.500H4.500V5.500H.5Z" stroke="#fff" strokeWidth="1.100" />
      </Svg>
      <Svg w={17} h={14} className="ml-[7px]">
        <path d="M.7 4.500H3L6.500 1V13L3 9.500H.7Z" stroke="#fff" strokeWidth="1.200" />
        <path d="M8.500 5Q10 7 8.500 9" stroke="#fff" strokeWidth="1.200" />
        <path d="M10.500 3Q13 7 10.500 11" stroke="#aaa" />
        <path d="M13 1.500Q17 7 13 12.500" stroke="#888" />
      </Svg>
      <Fit w={21} className="mt-px ml-[10px]">УКР</Fit>
      <div className="ml-[14px] flex h-full w-[53px] flex-col items-center justify-center gap-[6px]">
        <Fit w={27}>11:46</Fit>
        <Fit w={53}>14.02.2021</Fit>
      </div>
      <div className="mr-[3px] ml-[7px] h-full w-px bg-[#6a6d6c]" />
    </div>
  );
}

export default function App() {
  return (
    <div className="flex h-[1079px] w-[1919px] flex-col overflow-hidden bg-white font-['Noto_Sans','Open_Sans',sans-serif]">
      <TitleBar />
      <Ribbon />
      <div className="flex h-[862px] shrink-0">
        <NavPane />
        <div className="w-[4px] shrink-0 bg-[#e6e8ec]" />
        <div className="w-px shrink-0 bg-[#8d919b]" />
        <div className="min-w-0 flex-1">
          <DocTabs />
          <Datasheet />
          <RecordBar />
        </div>
      </div>
      <StatusBar />
      <Taskbar />
    </div>
  );
}
